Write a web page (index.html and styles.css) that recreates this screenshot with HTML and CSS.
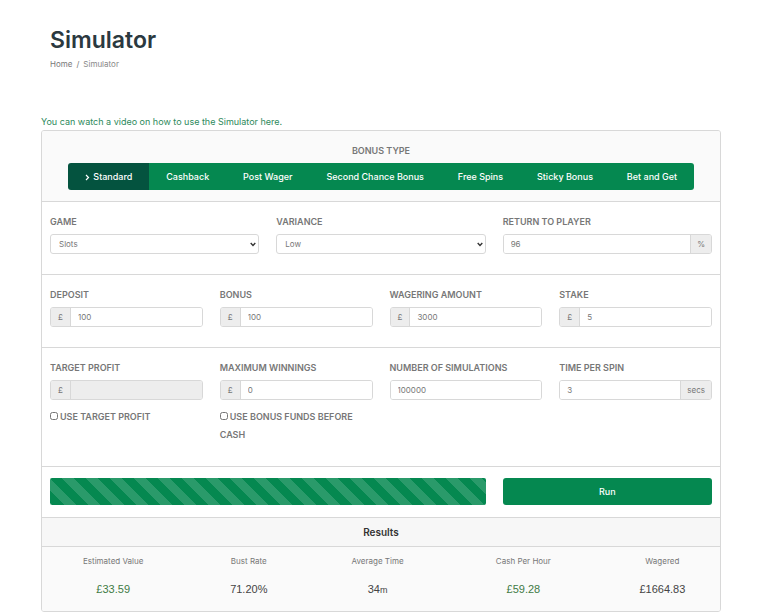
FILE: index.html
```html
<!DOCTYPE html>
<html lang="en">
<head>
  <meta charset="UTF-8" />
  <meta name="viewport" content="width=device-width, initial-scale=1.0"/>
  <title>Simulator</title>
  <link rel="stylesheet" href="styles.css">
</head>
<body>

  <header class="page-header">
    <h1>Simulator</h1>
    <nav class="breadcrumb">
      <a href="#">Home</a>
      <span>/</span>
      <small>Simulator</small>
    </nav>
  </header>

  <main>
    <a class="video-link" href="#">You can watch a video on how to use the Simulator here.</a>

    <form class="card" id="simulator-form">
      <section class="bonus-type">
        <h2>Bonus Type</h2>
        <div class="tabs">
          <button type="button" class="active">
            <svg width="5" height="7" viewBox="0 0 5 7"><path d="M1 1l2.5 2.5L1 6" fill="none" stroke="currentColor" stroke-width="1.2"/></svg>
            Standard
          </button>
          <button type="button">Cashback</button>
          <button type="button">Post Wager</button>
          <button type="button">Second Chance Bonus</button>
          <button type="button">Free Spins</button>
          <button type="button">Sticky Bonus</button>
          <button type="button">Bet and Get</button>
        </div>
      </section>

      <section class="row three">
        <div class="field">
          <label for="game">Game</label>
          <select id="game" name="game"><option>Slots</option></select>
        </div>
        <div class="field">
          <label for="variance">Variance</label>
          <select id="variance" name="variance"><option>Low</option></select>
        </div>
        <div class="field">
          <label for="rtp">Return to player</label>
          <div class="input-group">
            <input type="text" id="rtp" name="rtp" value="96" />
            <span class="addon">%</span>
          </div>
        </div>
      </section>

      <section class="row four">
        <div class="field">
          <label for="deposit">Deposit</label>
          <div class="input-group">
            <span class="addon">£</span>
            <input type="text" id="deposit" name="deposit" value="100" />
          </div>
        </div>
        <div class="field">
          <label for="bonus">Bonus</label>
          <div class="input-group">
            <span class="addon">£</span>
            <input type="text" id="bonus" name="bonus" value="100" />
          </div>
        </div>
        <div class="field">
          <label for="wagering">Wagering amount</label>
          <div class="input-group">
            <span class="addon">£</span>
            <input type="text" id="wagering" name="wagering" value="3000" />
          </div>
        </div>
        <div class="field">
          <label for="stake">Stake</label>
          <div class="input-group">
            <span class="addon">£</span>
            <input type="text" id="stake" name="stake" value="5" />
          </div>
        </div>
      </section>

      <section class="row four options">
        <div class="field">
          <label for="target">Target profit</label>
          <div class="input-group">
            <span class="addon">£</span>
            <input type="text" id="target" name="target" disabled />
          </div>
          <label class="check"><input type="checkbox" name="use-target" />Use target profit</label>
        </div>
        <div class="field">
          <label for="max">Maximum winnings</label>
          <div class="input-group">
            <span class="addon">£</span>
            <input type="text" id="max" name="max" value="0" />
          </div>
          <label class="check"><input type="checkbox" name="bonus-first" />Use bonus funds before cash</label>
        </div>
        <div class="field">
          <label for="simulations">Number of simulations</label>
          <div class="input-group">
            <input type="text" id="simulations" name="simulations" value="100000" />
          </div>
        </div>
        <div class="field">
          <label for="time">Time per spin</label>
          <div class="input-group">
            <input type="text" id="time" name="time" value="3" />
            <span class="addon">secs</span>
          </div>
        </div>
      </section>

      <section class="row three run-row">
        <div class="progress"></div>
        <button type="submit" class="run">Run</button>
      </section>

      <h3>Results</h3>
      <table class="results">
        <thead>
          <tr>
            <th class="wide">Estimated Value</th>
            <th>Bust Rate</th>
            <th>Average Time</th>
            <th class="wider">Cash Per Hour</th>
            <th class="narrow">Wagered</th>
          </tr>
        </thead>
        <tbody>
          <tr>
            <td class="positive">£33.59</td>
            <td>71.20%</td>
            <td>34<small>m</small></td>
            <td class="positive">£59.28</td>
            <td>£1664.83</td>
          </tr>
        </tbody>
      </table>
    </form>
  </main>

  <script>
    document.getElementById('simulator-form').addEventListener('submit', function(e) {
      e.preventDefault();
    });
  </script>
</body>
</html>
```
FILE: styles.css
```css
* {
  box-sizing: border-box;
}

body {
  margin: 0;
  padding: 24px 47px 0 41px;
  font-family: Inter, "Liberation Sans", sans-serif;
  font-size: 8px;
  color: #777;
  background: #fff;
}

a {
  color: inherit;
  text-decoration: none;
}

.page-header {
  padding: 0 9px;
}

h1 {
  margin: 0;
  font-size: 23px;
  line-height: 32px;
  font-weight: 600;
  color: #2b3940;
}

.breadcrumb {
  display: flex;
  gap: 4px;
  margin-top: 1px;
  line-height: 14px;
}

.breadcrumb small {
  font-size: 8px;
  color: #888;
}

main {
  margin-top: 44px;
}

.video-link {
  display: block;
  font-size: 9px;
  line-height: 14px;
  color: #2d8a5c;
}

.card {
  margin-top: 1px;
  border: 1px solid #d8d8d8;
  border-radius: 3px;
  overflow: hidden;
}

.bonus-type {
  padding: 13px 26px 11px;
  background: #fafafa;
}

h2 {
  margin: 0 0 5px;
  font-size: 9px;
  line-height: 14px;
  font-weight: 600;
  text-align: center;
  text-transform: uppercase;
}

.tabs {
  display: flex;
  border-radius: 3px;
  overflow: hidden;
}

button {
  height: 27px;
  padding: 0;
  border: none;
  background: #058850;
  color: #fff;
  font-family: inherit;
  font-size: 9px;
  font-weight: 500;
  cursor: pointer;
}

.tabs button {
  flex: 1 1 auto;
}

.tabs .active {
  background: #04533f;
}

.tabs svg {
  margin-right: 1px;
  vertical-align: -1px;
}

.row {
  display: grid;
  column-gap: 17px;
  padding: 13px 8px 20px;
  border-top: 1px solid #d8d8d8;
}

.three {
  grid-template-columns: repeat(3, 1fr);
}

.four {
  grid-template-columns: repeat(4, 1fr);
}

.field {
  min-width: 0;
}

label {
  display: block;
  margin-bottom: 5px;
  font-size: 9px;
  line-height: 14px;
  font-weight: 600;
  text-transform: uppercase;
}

.input-group {
  display: flex;
  height: 20px;
  border: 1px solid #d8d8d8;
  border-radius: 3px;
  overflow: hidden;
}

.input-group input,
select {
  width: 100%;
  min-width: 0;
  padding: 0 7px;
  border: none;
  background: #fff;
  color: #777;
  font-family: inherit;
  font-size: 8px;
}

select {
  height: 20px;
  padding: 0 8px;
  border: 1px solid #d8d8d8;
  border-radius: 3px;
  appearance: none;
  background: #fff url("data:image/svg+xml,%3Csvg xmlns='http://www.w3.org/2000/svg' width='6' height='5' viewBox='0 0 6 5'%3E%3Cpath d='M.7 1L3 3.4 5.3 1' fill='none' stroke='%23333' stroke-width='1.4'/%3E%3C/svg%3E") no-repeat right 2px center;
}

.input-group input:disabled {
  background: #ededed;
}

.addon {
  padding: 0 7px;
  background: #ededed;
  font-size: 8px;
  line-height: 18px;
}

.addon:first-child {
  border-right: 1px solid #d8d8d8;
}

.addon:last-child {
  padding: 0 6px;
  border-left: 1px solid #d8d8d8;
}

.check {
  margin: 8px 0 0;
  line-height: 18px;
}

.check input {
  width: 8px;
  height: 8px;
  margin: 0 2px 0 0;
}

.options {
  padding-bottom: 22px;
}

.run-row {
  padding: 11px 8px 12px;
}

.progress {
  grid-column: span 2;
  border-radius: 2px;
  background-color: #058850;
  background-image: linear-gradient(45deg, rgba(255, 255, 255, 0.15) 25%, transparent 25%, transparent 50%, rgba(255, 255, 255, 0.15) 50%, rgba(255, 255, 255, 0.15) 75%, transparent 75%);
  background-size: 24px 24px;
  background-position: 12px 0;
}

.run {
  border-radius: 3px;
}

h3 {
  margin: 0;
  border-top: 1px solid #d8d8d8;
  border-bottom: 1px solid #d8d8d8;
  background: #f7f7f7;
  color: #333;
  font-size: 10px;
  line-height: 28px;
  font-weight: 600;
  text-align: center;
}

.results {
  width: 100%;
  table-layout: fixed;
  border-collapse: collapse;
  background: #fafafa;
  text-align: center;
}

.results th {
  width: 19%;
  padding: 7px 0 8px;
  font-size: 8px;
  line-height: 14px;
  font-weight: 400;
}

.results .wide {
  width: 21%;
}

.results .wider {
  width: 24%;
}

.results .narrow {
  width: 17%;
}

.results td {
  padding: 5px 0 14px;
  font-family: "Liberation Sans", Arial, sans-serif;
  font-size: 11px;
  line-height: 16px;
  color: #444;
  vertical-align: baseline;
}

.results small {
  font-size: 9px;
  line-height: 1;
}

.results .positive {
  color: #3f7a45;
}
```
